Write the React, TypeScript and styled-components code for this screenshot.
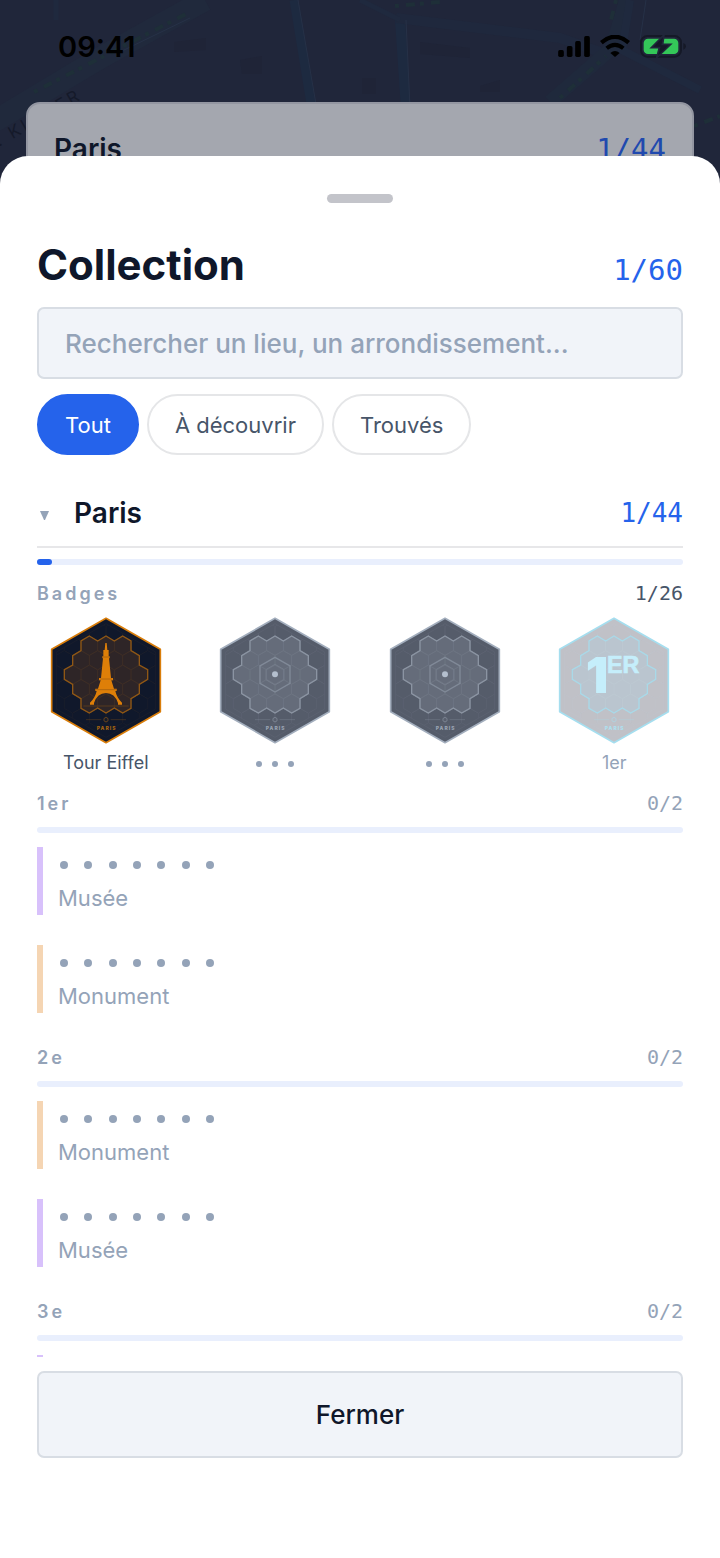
import { useState } from "react";
import styled, { createGlobalStyle } from "styled-components";

const GlobalStyle = createGlobalStyle`
  * {
    box-sizing: border-box;
  }
  body {
    margin: 0;
    font-family: Inter, "Liberation Sans", sans-serif;
    color: #0f172a;
  }
`;

const mono = `"DejaVu Sans Mono", "Liberation Mono", monospace`;

const Screen = styled.div`
  position: relative;
  display: flex;
  flex-direction: column;
  height: 100vh;
  padding-top: 156px;
  background-color: #20263a;
  overflow: hidden;
`;

// what stays visible behind the sheet
const Behind = styled.div`
  position: absolute;
  top: 0;
  left: 0;
  right: 0;
  height: 200px;
  overflow: hidden;
`;

const MapArt = styled.svg`
  position: absolute;
  top: 0;
  left: 0;
  width: 100%;
  height: 200px;
`;

const StatusBar = styled.div`
  position: relative;
  display: flex;
  align-items: center;
  justify-content: space-between;
  height: 92px;
  padding: 0 34px 0 58px;
  color: #000;
  font-size: 29px;
  font-weight: 600;
`;

const StatusIcons = styled.div`
  display: flex;
  align-items: center;
  gap: 10px;
`;

const PeekCard = styled.div`
  position: relative;
  display: flex;
  justify-content: space-between;
  align-items: baseline;
  height: 140px;
  margin: 10px 26px 0;
  padding: 28px 26px;
  border: 2px solid #9396a1;
  border-radius: 14px;
  background-color: #a4a7af;
`;

const Sheet = styled.main`
  position: relative;
  display: flex;
  flex-direction: column;
  flex: 1;
  min-height: 0;
  padding: 38px 37px 100px;
  border-radius: 28px 28px 0 0;
  background-color: #fff;
`;

const Handle = styled.div`
  flex-shrink: 0;
  align-self: center;
  width: 66px;
  height: 9px;
  border-radius: 5px;
  background-color: #c3c4ca;
`;

const TitleRow = styled.header`
  display: flex;
  align-items: baseline;
  justify-content: space-between;
  margin: 36px 0 16px;
`;

const Title = styled.h1`
  margin: 0;
  font-size: 42px;
  line-height: 52px;
  font-weight: 700;
`;

const Count = styled.span<{ size: number; color: string }>`
  font-family: ${mono};
  font-size: ${(props) => props.size}px;
  color: ${(props) => props.color};
`;

const Search = styled.input`
  width: 100%;
  height: 72px;
  flex-shrink: 0;
  padding: 0 26px;
  border: 2px solid #d8dde4;
  border-radius: 7px;
  background-color: #f1f4f9;
  color: #0f172a;
  font-family: inherit;
  font-size: 26px;
  font-weight: 500;
  &::placeholder {
    color: #94a3b8;
    opacity: 1;
  }
`;

const Filters = styled.div`
  display: flex;
  gap: 8px;
  margin: 15px 0 25px;
`;

const Chip = styled.button<{ $active: boolean }>`
  height: 61px;
  padding: 0 26px;
  border: 2px solid ${(props) => (props.$active ? "#2563eb" : "#e5e6e8")};
  border-radius: 31px;
  background-color: ${(props) => (props.$active ? "#2563eb" : "#fff")};
  color: ${(props) => (props.$active ? "#fff" : "#475569")};
  font-family: inherit;
  font-size: 22px;
`;

const List = styled.div`
  flex: 1;
  min-height: 0;
  overflow-y: auto;
  scrollbar-width: none;
`;

const CityHeader = styled.button`
  display: flex;
  align-items: center;
  width: 100%;
  height: 68px;
  margin-bottom: 11px;
  padding: 0;
  border: none;
  border-bottom: 2px solid #e7e7e9;
  background: none;
  color: #0f172a;
  font-family: inherit;
  text-align: left;
`;

const Caret = styled.svg`
  width: 9px;
  height: 9px;
  margin: 5px 25px 0 3px;
  fill: #94a3b8;
`;

const CityName = styled.span`
  flex: 1;
  font-size: 28px;
  font-weight: 600;
`;

const Track = styled.div`
  height: 6px;
  margin-bottom: 14px;
  border-radius: 3px;
  background-color: #e9effd;
`;

const Fill = styled.div`
  height: 6px;
  border-radius: 3px;
  background-color: #2563eb;
`;

const GroupHeader = styled.div`
  display: flex;
  align-items: center;
  justify-content: space-between;
  height: 28px;
  margin-bottom: 10px;
`;

const GroupName = styled.h2`
  margin: 0;
  color: #94a3b8;
  font-size: 18px;
  font-weight: 600;
  letter-spacing: 3px;
`;

const Badges = styled.div`
  display: grid;
  grid-template-columns: repeat(4, 1fr);
  column-gap: 32px;
  margin-bottom: 13px;
`;

const BadgeCell = styled.div`
  display: flex;
  flex-direction: column;
  align-items: center;
  gap: 5px;
`;

const BadgeLabel = styled.span<{ $found: boolean }>`
  font-size: 18px;
  line-height: 26px;
  color: ${(props) => (props.$found ? "#475569" : "#94a3b8")};
`;

const Place = styled.div<{ $color: string }>`
  margin-bottom: 30px;
  padding-left: 15px;
  border-left: 6px solid ${(props) => props.$color};
  color: #94a3b8;
  font-size: 22px;
  line-height: 34px;
`;

const Dots = styled.div<{ $small?: boolean }>`
  display: flex;
  align-items: center;
  justify-content: space-between;
  width: ${(props) => (props.$small ? 38 : 154)}px;
  height: ${(props) => (props.$small ? 26 : 34)}px;
  margin-left: ${(props) => (props.$small ? 0 : 2)}px;
  padding-top: 2px;
`;

const Dot = styled.i<{ $small?: boolean }>`
  width: ${(props) => (props.$small ? 6 : 8)}px;
  height: ${(props) => (props.$small ? 6 : 8)}px;
  border-radius: 50%;
  background-color: #94a3b8;
`;

const CloseButton = styled.button`
  flex-shrink: 0;
  height: 87px;
  margin-top: 14px;
  border: 2px solid #d8dde4;
  border-radius: 7px;
  background-color: #f1f4f9;
  color: #0f172a;
  font-family: inherit;
  font-size: 26px;
  font-weight: 500;
`;

type Palette = {
  bg: string;
  inner: string;
  edge: string;
  outline: string;
  grid: string;
  faint: string;
  text: string;
};

const palettes: Record<string, Palette> = {
  gold: {
    bg: "#10182b",
    inner: "#2e2527",
    edge: "#d97d0a",
    outline: "#8f5715",
    grid: "#402f26",
    faint: "#1c202c",
    text: "#a8650f",
  },
  locked: {
    bg: "#555c6a",
    inner: "#656c7a",
    edge: "#a3aebd",
    outline: "#8b94a2",
    grid: "#6e7583",
    faint: "#5d6472",
    text: "#9aa4b3",
  },
  sky: {
    bg: "#c0c1c7",
    inner: "#bac5cf",
    edge: "#a5deef",
    outline: "#a9d9e8",
    grid: "#bcc8d1",
    faint: "#bfc3ca",
    text: "#aee0f0",
  },
};

const hexPath = (cx: number, cy: number, s: number) => {
  const w = s * 0.866;
  return `M${cx} ${cy - s}L${cx + w} ${cy - s / 2}V${cy + s / 2}L${cx} ${cy + s}L${cx - w} ${cy + s / 2}V${cy - s / 2}Z`;
};

const lattice = (radius: number) => {
  let d = "";
  for (let r = -radius; r <= radius; r++) {
    const n = radius * 2 + 1 - Math.abs(r);
    for (let i = 0; i < n; i++) {
      d += hexPath(228 + (i - (n - 1) / 2) * 50, 207 + r * 43.3, 28.9);
    }
  }
  return d;
};

const cluster =
  "M178 91L203 106L228 91L253 106L278 91L303 106V135L328 150V178L353 192V221L328 236V264L303 279V308L278 322L253 307L228 322L203 307L178 322L153 308V279L128 264V236L103 221V192L128 178V150L153 135V106Z";

const frame = "M228 54L377 139V310L228 395L79 310V139Z";

function Badge({ kind, clip }: { kind: string; clip: string }) {
  const p = palettes[kind];
  return (
    <svg width="112" height="128" viewBox="60 34 336 384" aria-hidden="true">
      <clipPath id={clip}>
        <path d={frame} />
      </clipPath>
      <path
        d="M228 38L391 131V318L228 411L65 318V131Z"
        fill={p.bg}
        stroke={p.edge}
        strokeWidth="5"
        strokeLinejoin="round"
      />
      <path d={lattice(3)} fill="none" stroke={p.faint} strokeWidth="2" clipPath={`url(#${clip})`} />
      <path d={frame} fill="none" stroke={p.faint} strokeWidth="2" />
      <path d={cluster} fill={p.inner} />
      <path d={lattice(2)} fill="none" stroke={p.grid} strokeWidth="2" />
      <path d={cluster} fill="none" stroke={p.outline} strokeWidth="4" />
      {kind === "gold" && (
        <>
          <path
            d="M226 112H230L232 133H236V152H239V158H237L243 217H249V224H244L252 249H260V256H256Q260 276 276 291V297H264V292Q254 262 228 262Q202 262 192 292V297H180V291Q196 276 200 256H196V249H204L212 224H207V217H213L219 158H217V152H220V133H224Z"
            fill="#de7f08"
          />
          <path d="M209 220H247M198 252H258M218 154H238" stroke="#9a5c12" strokeWidth="2" />
          <path d="M160 301H296" stroke="#6d4519" strokeWidth="2" />
        </>
      )}
      {kind === "locked" && (
        <>
          <path d={hexPath(228, 207, 52)} fill="none" stroke="#818a98" strokeWidth="4" />
          <path d={hexPath(228, 207, 31)} fill="none" stroke="#757d8b" strokeWidth="3" />
          <circle cx="228" cy="206" r="9" fill="#b4bfce" />
        </>
      )}
      {kind === "sky" && (
        <g fill="#c5eefb">
          <text x="143" y="262" fontFamily="Inter, sans-serif" fontWeight="900" fontSize="150">
            1
          </text>
          <text
            x="207"
            y="202"
            fontFamily='"Liberation Sans", sans-serif'
            fontWeight="700"
            fontSize="70"
            stroke="#c5eefb"
            strokeWidth="2"
          >
            ER
          </text>
        </g>
      )}
      <path d="M168 342H214M242 342H288" stroke={p.outline} strokeOpacity="0.5" strokeWidth="2" />
      <path d={hexPath(228, 342, 7)} fill="none" stroke={p.outline} strokeWidth="2" />
      <text
        x="230"
        y="374"
        textAnchor="middle"
        fill={p.text}
        fontFamily="Inter, sans-serif"
        fontSize="15"
        fontWeight="800"
        letterSpacing="3"
      >
        PARIS
      </text>
    </svg>
  );
}

function HiddenName({ count, small }: { count: number; small?: boolean }) {
  return (
    <Dots $small={small}>
      {Array.from({ length: count }, (_, i) => (
        <Dot key={i} $small={small} />
      ))}
    </Dots>
  );
}

function Map() {
  return (
    <MapArt viewBox="0 0 720 200" preserveAspectRatio="xMinYMin slice" aria-hidden="true">
      <g fill="none" stroke="#1d2a40">
        <path d="M-10 124L100 58L205 0" strokeWidth="22" stroke="#20293c" />
        <path d="M294 0L312 110" strokeWidth="9" />
        <path d="M400 20L406 110" strokeWidth="10" />
        <path d="M396 18L560 38L600 52" strokeWidth="10" stroke="#1f283d" />
        <path d="M626 0L612 48L550 102" strokeWidth="14" stroke="#1f293c" />
        <path d="M630 0L622 50L700 90" strokeWidth="8" stroke="#1f293e" />
        <path d="M56 0V20M360 0L400 20" strokeWidth="5" stroke="#1f293e" />
      </g>
      <g fill="none" stroke="#263147" strokeWidth="1">
        <path d="M298 0L317 110M120 52L190 18M410 108L406 20M646 0L640 40" />
      </g>
      <g fill="none" stroke="#1e2f38" strokeWidth="4" strokeDasharray="4 7 9 5">
        <path d="M34 92L186 14M395 6L440 2M616 0L610 24M560 98L606 56M694 126L720 116" />
      </g>
      <path
        d="M240 60L262 56V74H242ZM174 42L206 38V50L174 52ZM420 42L470 48V58L420 54ZM480 86L500 80V92H480ZM362 78H376V94H362Z"
        fill="#1f2437"
      />
      <text
        transform="translate(-1 147) rotate(-30)"
        fill="#151a2a"
        fontFamily="Inter, sans-serif"
        fontSize="17"
        letterSpacing="3"
      >
        . KLÉBER
      </text>
    </MapArt>
  );
}

const badges = [
  { kind: "gold", label: "Tour Eiffel", found: true },
  { kind: "locked", label: "", found: false },
  { kind: "locked", label: "", found: false },
  { kind: "sky", label: "1er", found: false },
];

const museum = { type: "Musée", color: "#d8c1fb" };
const monument = { type: "Monument", color: "#f5d5b3" };

const districts = [
  { name: "1er", places: [museum, monument] },
  { name: "2e", places: [monument, museum] },
  { name: "3e", places: [museum, monument] },
];

const filters = ["Tout", "À découvrir", "Trouvés"];

function App() {
  const [filter, setFilter] = useState("Tout");
  const [open, setOpen] = useState(true);

  return (
    <Screen>
      <GlobalStyle />
      <Behind>
        <Map />
        <StatusBar>
          <span>09:41</span>
          <StatusIcons>
            <svg width="32" height="21" viewBox="594 105 95 63">
              <rect x="594" y="147" width="17" height="21" rx="5" />
              <rect x="620" y="135" width="17" height="33" rx="5" />
              <rect x="645" y="120" width="17" height="48" rx="5" />
              <rect x="672" y="105" width="17" height="63" rx="5" />
            </svg>
            <svg width="30" height="22" viewBox="719 102 90 66">
              <path d="M750 156Q764 144 778 156L764 168Z" />
              <path d="M739 142Q764 121 789 142" fill="none" stroke="#000" strokeWidth="12" />
              <path d="M723 125Q764 90 805 125" fill="none" stroke="#000" strokeWidth="13" />
            </svg>
            <svg width="46" height="23" viewBox="840 103 138 69">
              <rect x="843" y="106" width="120" height="62" rx="19" fill="none" stroke="#151927" strokeWidth="6" />
              <path d="M970 127Q978 130 978 137Q978 144 970 147Z" fill="#151927" />
              <rect x="851" y="114" width="104" height="46" rx="13" fill="#34c759" />
              <path d="M912 103L874 141H898L890 171L932 131H908Z" fill="#20263a" stroke="#20263a" strokeWidth="5" />
              <path d="M909 110L880 138H902L894 165L926 134H904Z" fill="#151927" />
            </svg>
          </StatusIcons>
        </StatusBar>
        <PeekCard>
          <CityName>Paris</CityName>
          <Count size={29} color="#2049ae">
            1/44
          </Count>
        </PeekCard>
      </Behind>

      <Sheet>
        <Handle />
        <TitleRow>
          <Title>Collection</Title>
          <Count size={29} color="#2563eb">
            1/60
          </Count>
        </TitleRow>
        <Search
          type="search"
          aria-label="Rechercher"
          placeholder="Rechercher un lieu, un arrondissement..."
        />
        <Filters>
          {filters.map((name) => (
            <Chip key={name} $active={filter === name} onClick={() => setFilter(name)}>
              {name}
            </Chip>
          ))}
        </Filters>
        <List>
          <CityHeader aria-expanded={open} onClick={() => setOpen(!open)}>
            <Caret viewBox="0 0 9 9">
              <path d="M0 0H9L5 9H4Z" />
            </Caret>
            <CityName>Paris</CityName>
            <Count size={26} color="#2563eb">
              1/44
            </Count>
          </CityHeader>
          <Track>
            <Fill style={{ width: `${(1 / 44) * 100}%` }} />
          </Track>
          {open && (
            <>
              <GroupHeader>
                <GroupName>Badges</GroupName>
                <Count size={20} color="#475569">
                  1/26
                </Count>
              </GroupHeader>
              <Badges>
                {badges.map((badge, i) => (
                  <BadgeCell key={i}>
                    <Badge kind={badge.kind} clip={`badge-${i}`} />
                    {badge.label ? (
                      <BadgeLabel $found={badge.found}>{badge.label}</BadgeLabel>
                    ) : (
                      <HiddenName count={3} small />
                    )}
                  </BadgeCell>
                ))}
              </Badges>
              {districts.map((district) => (
                <section key={district.name}>
                  <GroupHeader>
                    <GroupName>{district.name}</GroupName>
                    <Count size={20} color="#94a3b8">
                      0/2
                    </Count>
                  </GroupHeader>
                  <Track />
                  {district.places.map((place) => (
                    <Place key={place.type} $color={place.color}>
                      <HiddenName count={7} />
                      {place.type}
                    </Place>
                  ))}
                </section>
              ))}
            </>
          )}
        </List>
        <CloseButton>Fermer</CloseButton>
      </Sheet>
    </Screen>
  );
}

export default App;
